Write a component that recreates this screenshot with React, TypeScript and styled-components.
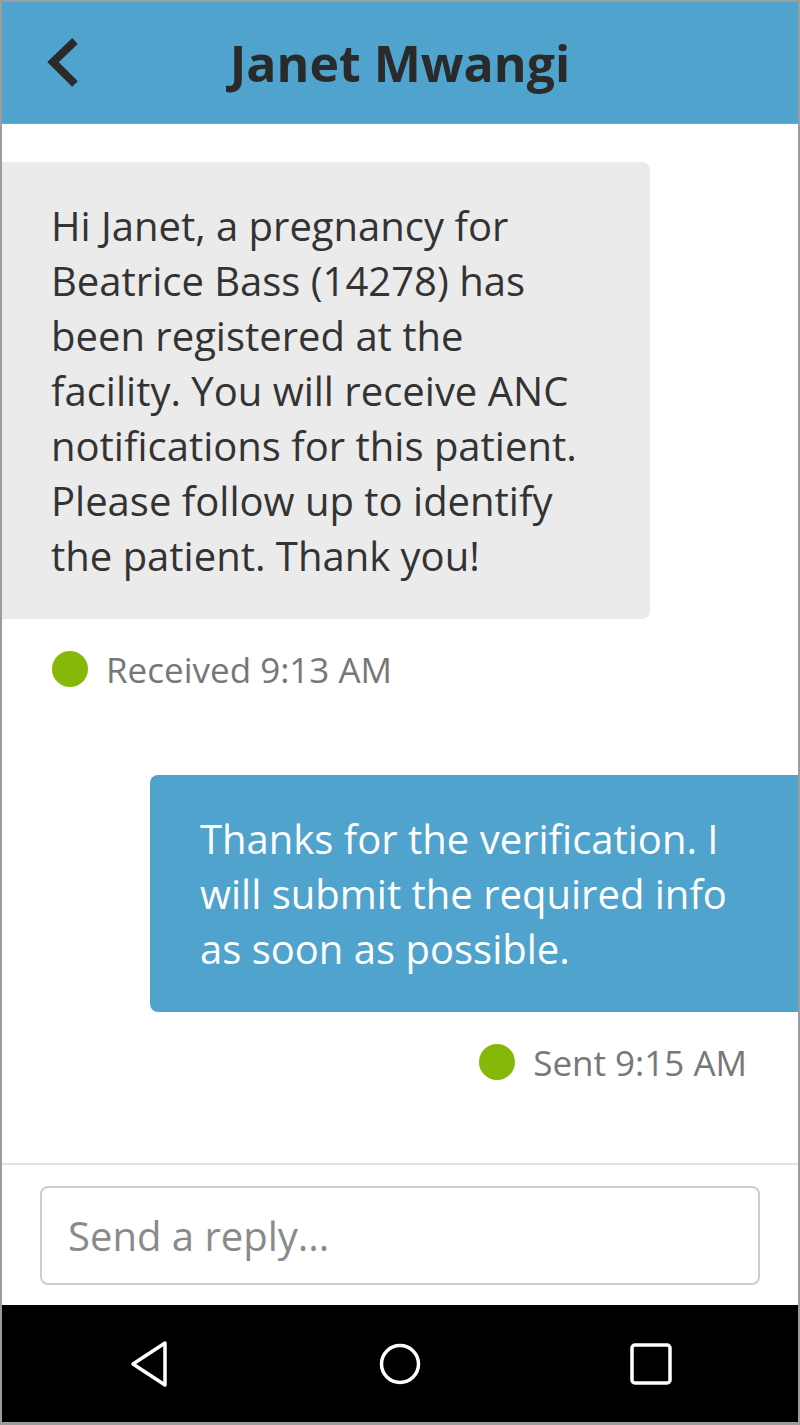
import React from "react";
import styled, { createGlobalStyle } from "styled-components";

const Global = createGlobalStyle`
  html, body { margin: 0; padding: 0; background: #fff; }
  * { box-sizing: border-box; }
`;

const Frame = styled.div`
  width: 800px;
  height: 1425px;
  border: 2px solid #9c9c9c;
  border-bottom-width: 3px;
  display: flex;
  flex-direction: column;
  font-family: "Open Sans", "Noto Sans", sans-serif;
  background: #fff;
  overflow: hidden;
`;

const Header = styled.header`
  height: 122px;
  flex-shrink: 0;
  background: #4fa3cc;
  display: grid;
  grid-template-columns: 120px 1fr 120px;
  align-items: center;
  border-bottom: 1px solid #5cb0d8;
`;

const BackButton = styled.button`
  border: 0;
  background: transparent;
  padding: 0 0 0 40px;
  height: 100%;
  display: flex;
  align-items: center;
  cursor: pointer;
`;

const Title = styled.h1`
  margin: 0;
  text-align: center;
  font-size: 50px;
  font-weight: 700;
  color: #2a2a2a;
  line-height: 1;
`;

const Thread = styled.main`
  flex: 1;
  display: flex;
  flex-direction: column;
  padding-top: 38px;
`;

const Bubble = styled.div<{ $sent?: boolean }>`
  width: 648px;
  align-self: ${(p) => (p.$sent ? "flex-end" : "flex-start")};
  background: ${(p) => (p.$sent ? "#4fa3cc" : "#ebebeb")};
  color: ${(p) => (p.$sent ? "#fff" : "#333")};
  border-radius: ${(p) => (p.$sent ? "8px 0 0 8px" : "0 8px 8px 0")};
  padding: ${(p) => (p.$sent ? "36px 36px 36px 50px" : "36px 58px 36px 49px")};
  font-size: 40px;
  line-height: 55px;
`;

const Status = styled.div<{ $sent?: boolean }>`
  display: flex;
  align-items: center;
  gap: 18px;
  align-self: ${(p) => (p.$sent ? "flex-end" : "flex-start")};
  padding: ${(p) => (p.$sent ? "0 51px 0 0" : "0 0 0 50px")};
  margin-top: 24px;
  height: 52px;
  font-size: 35px;
  color: #777;
`;

const Dot = styled.span`
  width: 36px;
  height: 36px;
  border-radius: 50%;
  background: #86b80a;
  flex-shrink: 0;
`;

const Spacer = styled.div<{ $h: number }>`
  height: ${(p) => p.$h}px;
  flex-shrink: 0;
`;

const Composer = styled.div`
  flex-shrink: 0;
  border-top: 2px solid #e3e3e3;
  padding: 21px 38px 20px 38px;
`;

const ReplyInput = styled.input`
  width: 100%;
  height: 99px;
  border: 2px solid #cdcdcd;
  border-radius: 8px;
  padding: 0 26px;
  font-family: "Open Sans", "Noto Sans", sans-serif;
  font-size: 40px;
  color: #333;
  outline: none;
  &::placeholder {
    color: #8a8a8a;
  }
`;

const NavBar = styled.nav`
  height: 117px;
  flex-shrink: 0;
  background: #000;
  display: grid;
  grid-template-columns: repeat(3, 1fr);
  align-items: center;
  justify-items: center;
  padding: 0 22px;
`;

const NavButton = styled.button`
  border: 0;
  background: transparent;
  padding: 0;
  display: flex;
  align-items: center;
  justify-content: center;
  width: 80px;
  height: 80px;
`;

export default function App() {
  return (
    <>
      <Global />
      <Frame>
        <Header>
          <BackButton aria-label="Back">
            <svg width="40" height="54" viewBox="0 0 40 54">
              <polyline
                points="33,5 11,26 33,48"
                fill="none"
                stroke="#2a2a2a"
                strokeWidth="8"
                strokeLinejoin="miter"
              />
            </svg>
          </BackButton>
          <Title>Janet Mwangi</Title>
          <div />
        </Header>
        <Thread>
          <Bubble>
            Hi Janet, a pregnancy for Beatrice Bass (14278) has been registered at the
            facility. You will receive ANC notifications for this patient. Please follow up
            to identify the patient. Thank you!
          </Bubble>
          <Status>
            <Dot />
            Received 9:13 AM
          </Status>
          <Spacer $h={80} />
          <Bubble $sent>
            Thanks for the verification. I will submit the required info as soon as possible.
          </Bubble>
          <Status $sent>
            <Dot />
            Sent 9:15 AM
          </Status>
        </Thread>
        <Composer>
          <ReplyInput placeholder="Send a reply..." />
        </Composer>
        <NavBar>
          <NavButton aria-label="Back">
            <svg width="44" height="48" viewBox="0 0 44 48">
              <path d="M38 3 L6 24 L38 45 Z" fill="none" stroke="#fff" strokeWidth="3.5" strokeLinejoin="round" />
            </svg>
          </NavButton>
          <NavButton aria-label="Home">
            <svg width="44" height="44" viewBox="0 0 44 44">
              <circle cx="22" cy="22" r="18.5" fill="none" stroke="#fff" strokeWidth="3.5" />
            </svg>
          </NavButton>
          <NavButton aria-label="Recent apps">
            <svg width="44" height="44" viewBox="0 0 44 44">
              <rect x="3" y="3" width="38" height="38" rx="3" fill="none" stroke="#fff" strokeWidth="3.5" />
            </svg>
          </NavButton>
        </NavBar>
      </Frame>
    </>
  );
}
